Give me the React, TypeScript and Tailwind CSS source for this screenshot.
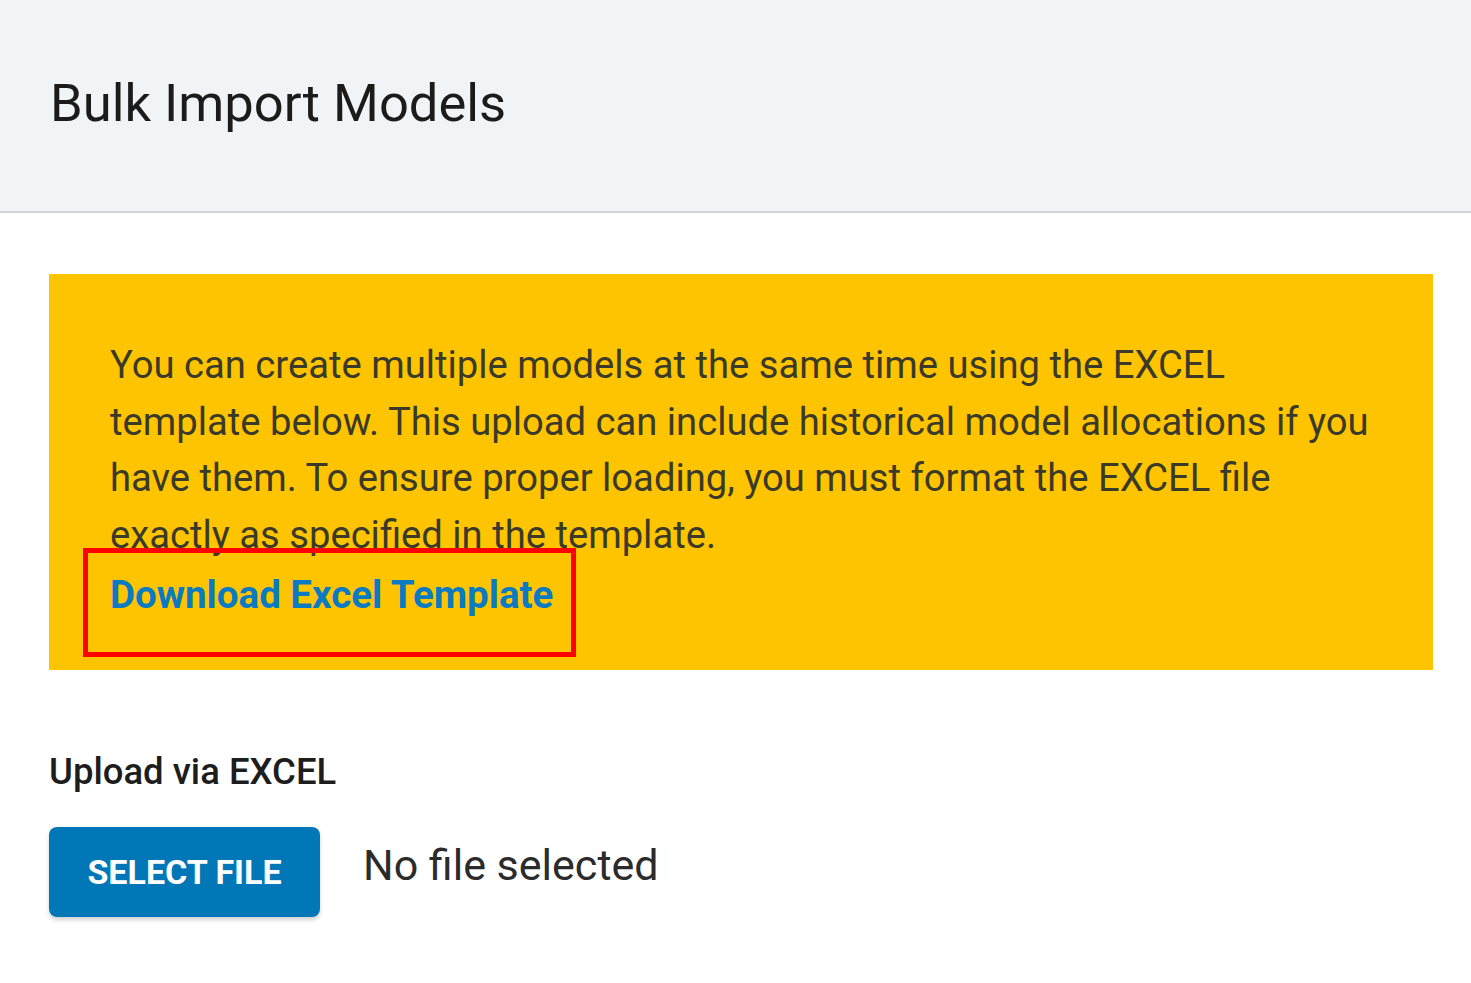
import React from 'react';

const font = { fontFamily: 'Roboto, "Noto Sans", sans-serif' };

export default function App() {
  return (
    <div className="min-h-screen w-full bg-white text-[#222]" style={font}>
      <header className="h-[213px] bg-[#f1f4f6] border-b-2 border-[#d1d6db] flex items-center pl-[50px]">
        <h1 className="text-[52.5px] leading-none text-[#1b1b1b] font-normal -mt-[4px]">Bulk Import Models</h1>
      </header>

      <main className="pl-[49px] pr-[38px] pt-[61px]">
        <section className="bg-[#ffc400] h-[396px] pl-[61px] pt-[63px]">
          <p className="text-[38.2px] leading-[56.7px] text-[#3a3a2a] whitespace-nowrap">
            You can create multiple models at the same time using the EXCEL
            <br />
            template below. This upload can include historical model allocations if you
            <br />
            have them. To ensure proper loading, you must format the EXCEL file
            <br />
            exactly as specified in the template.
          </p>
          <div className="relative inline-block mt-[3px]">
            <a href="#" className="text-[38.5px] leading-[56px] font-bold text-[#0a7ac2] block">
              Download Excel Template
            </a>
            <span className="absolute left-[-27px] top-[-19px] w-[493px] h-[109px] border-[5px] border-[#ff0000] pointer-events-none" />
          </div>
        </section>

        <div className="mt-[80px]">
          <label className="block text-[36.5px] leading-[44px] font-medium text-[#1d1d1d]">Upload via EXCEL</label>
          <div className="flex items-center gap-[43px] mt-[33px]">
            <button className="w-[271px] h-[90px] rounded-[8px] bg-[#0277b7] text-white text-[34px] font-bold shadow-[0_3px_4px_rgba(0,0,0,0.18)]">
              SELECT FILE
            </button>
            <span className="text-[43px] text-[#2b2b2b] -mt-[14px]">No file selected</span>
          </div>
        </div>
      </main>
    </div>
  );
}
